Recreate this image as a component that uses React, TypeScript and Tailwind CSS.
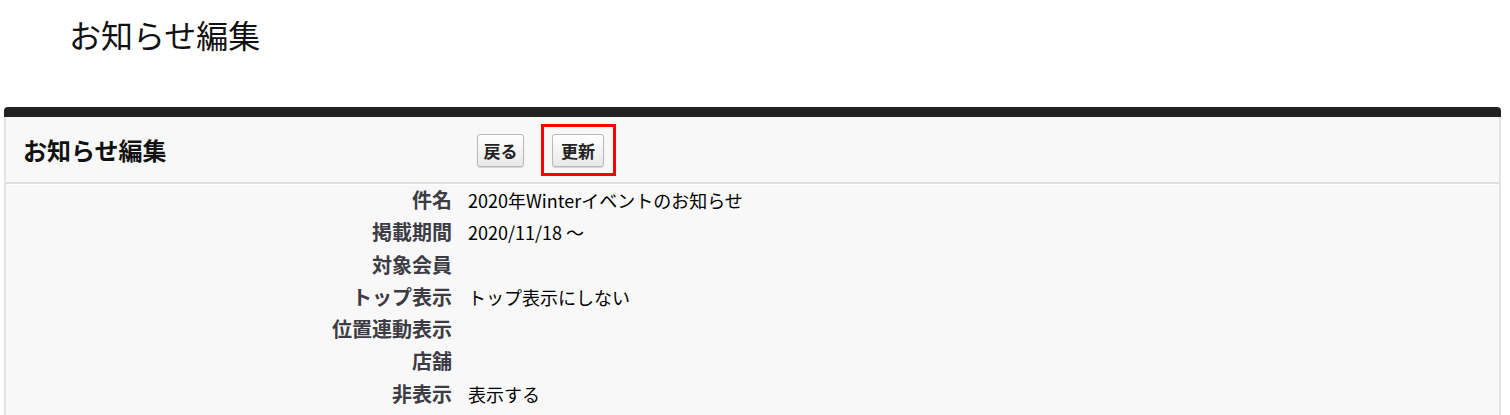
export default function App() {
  const rows = [
    { label: "件名", value: "2020年Winterイベントのお知らせ" },
    { label: "掲載期間", value: "2020/11/18 ～" },
    { label: "対象会員", value: "" },
    { label: "トップ表示", value: "トップ表示にしない" },
    { label: "位置連動表示", value: "" },
    { label: "店舗", value: "" },
    { label: "非表示", value: "表示する" },
  ]

  return (
    <div
      className="min-h-screen bg-white text-black"
      style={{ fontFamily: '"Noto Sans CJK JP", "Noto Sans", sans-serif' }}
    >
      {/* Page title */}
      <h1 className="pl-[69px] pt-[12px] h-[56px] leading-[44px] text-[32px] font-normal text-[#111]">
        お知らせ編集
      </h1>

      {/* Panel */}
      <div className="mt-[51px] ml-[4px] w-[1497px]">
        <div className="h-[10px] bg-[#222222] rounded-t-[4px]" />
        <div className="bg-[#f8f8f8] border-x-2 border-[#e3e3e3]">
          {/* Header */}
          <div className="relative flex items-center h-[67px] border-b-2 border-[#dedede]">
            <h2 className="w-[471px] pl-[17px] text-[24px] font-bold leading-none text-[#111]">
              お知らせ編集
            </h2>
            <div className="flex items-center gap-[28px] pt-[2px]">
              <button className="w-[47px] h-[33px] rounded-[3px] border border-[#b8b8b8] bg-gradient-to-b from-white to-[#e9e9e9] shadow-[0_1px_1px_rgba(0,0,0,0.15)] text-[17px] font-bold text-[#222] leading-none">
                戻る
              </button>
              <div className="relative">
                <button className="w-[52px] h-[33px] rounded-[3px] border border-[#b8b8b8] bg-gradient-to-b from-white to-[#e9e9e9] shadow-[0_1px_1px_rgba(0,0,0,0.15)] text-[17px] font-bold text-[#222] leading-none">
                  更新
                </button>
                {/* Highlight annotation */}
                <div className="absolute -left-[11px] -top-[10px] w-[75px] h-[52px] border-[3px] border-[#ff0000] pointer-events-none" />
              </div>
            </div>
          </div>
          <div className="h-[1px] bg-white" />

          {/* Details */}
          <div className="flex flex-col gap-[8.3px] pt-[3px] pb-[20px]">
            {rows.map((row) => (
              <div key={row.label} className="grid grid-cols-[446px_1fr] gap-x-[16px] h-[24px] items-center">
                <div className="text-right text-[20px] font-bold text-[#3c3c44] leading-none">{row.label}</div>
                <div className="text-[18px] text-black leading-none">{row.value}</div>
              </div>
            ))}
          </div>
        </div>
      </div>
    </div>
  )
}
